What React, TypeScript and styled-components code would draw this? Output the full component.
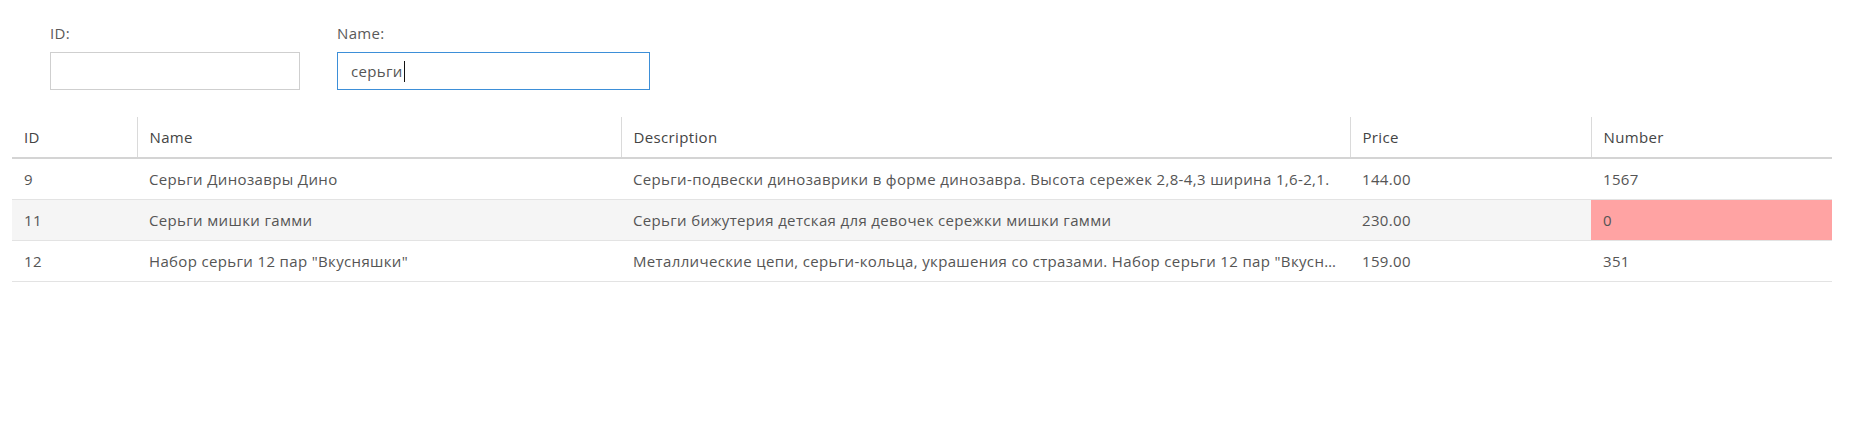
import React from 'react';
import styled, { createGlobalStyle } from 'styled-components';

const GlobalStyle = createGlobalStyle`
  body {
    margin: 0;
    background: #fff;
    font-family: "Open Sans", "Noto Sans", Arial, sans-serif;
    color: #333;
  }
`;

const Page = styled.div`
  padding: 23px 21px 0 12px;
`;

const FilterBar = styled.div`
  display: flex;
  gap: 37px;
  padding-left: 38px;
`;

const Field = styled.div<{ $width: number }>`
  display: flex;
  flex-direction: column;
  width: ${p => p.$width}px;
`;

const Label = styled.div`
  font-size: 15px;
  letter-spacing: 0.35px;
  line-height: 20px;
  color: #5a5a5a;
  margin-bottom: 9px;
`;

const InputBox = styled.div<{ $focused?: boolean }>`
  height: 38px;
  box-sizing: border-box;
  border: 1px solid ${p => (p.$focused ? '#3d8fd8' : '#cfcfcf')};
  display: flex;
  align-items: center;
  padding: 0 13px;
  font-size: 15px;
  letter-spacing: 0.35px;
  color: #555;
`;

const Caret = styled.span`
  display: inline-block;
  width: 1px;
  height: 21px;
  background: #111;
  margin-left: 1px;
`;

const Table = styled.table`
  margin-top: 27px;
  width: 1820px;
  border-collapse: collapse;
  table-layout: fixed;
  font-size: 15px;
  letter-spacing: 0.35px;
  color: #555;
`;

const HeadCell = styled.th<{ $first?: boolean }>`
  height: 40px;
  padding: 0 12px;
  text-align: left;
  font-weight: 400;
  color: #444;
  border-bottom: 2px solid #d4d4d4;
  border-left: ${p => (p.$first ? 'none' : '1px solid #dadada')};
`;

const Row = styled.tr<{ $alt?: boolean }>`
  background: ${p => (p.$alt ? '#f5f5f5' : '#fff')};
`;

const Cell = styled.td<{ $alert?: boolean }>`
  height: 40px;
  padding: 0 12px;
  box-sizing: content-box;
  border-bottom: 1px solid #e3e3e3;
  white-space: nowrap;
  overflow: hidden;
  text-overflow: ellipsis;
  background: ${p => (p.$alert ? '#ffa3a3' : 'transparent')};
`;

const columns = [
  { title: 'ID', width: 125 },
  { title: 'Name', width: 484 },
  { title: 'Description', width: 729 },
  { title: 'Price', width: 241 },
  { title: 'Number', width: 241 },
];

const rows = [
  {
    id: 9,
    name: 'Серьги Динозавры Дино',
    description: 'Серьги-подвески динозаврики в форме динозавра. Высота сережек 2,8-4,3 ширина 1,6-2,1.',
    price: '144.00',
    number: 1567,
  },
  {
    id: 11,
    name: 'Серьги мишки гамми',
    description: 'Серьги бижутерия детская для девочек сережки мишки гамми',
    price: '230.00',
    number: 0,
  },
  {
    id: 12,
    name: 'Набор серьги 12 пар "Вкусняшки"',
    description: 'Металлические цепи, серьги-кольца, украшения со стразами. Набор серьги 12 пар "Вкусняшки" для девочек',
    price: '159.00',
    number: 351,
  },
];

const App: React.FC = () => {
  return (
    <Page>
      <GlobalStyle />
      <FilterBar>
        <Field $width={250}>
          <Label>ID:</Label>
          <InputBox />
        </Field>
        <Field $width={313}>
          <Label>Name:</Label>
          <InputBox $focused>
            <span>серьги</span>
            <Caret />
          </InputBox>
        </Field>
      </FilterBar>
      <Table>
        <colgroup>
          {columns.map(c => (
            <col key={c.title} style={{ width: c.width }} />
          ))}
        </colgroup>
        <thead>
          <tr>
            {columns.map((c, i) => (
              <HeadCell key={c.title} $first={i === 0}>
                {c.title}
              </HeadCell>
            ))}
          </tr>
        </thead>
        <tbody>
          {rows.map((r, i) => (
            <Row key={r.id} $alt={i % 2 === 1}>
              <Cell>{r.id}</Cell>
              <Cell>{r.name}</Cell>
              <Cell>{r.description}</Cell>
              <Cell>{r.price}</Cell>
              <Cell $alert={r.number === 0}>{r.number}</Cell>
            </Row>
          ))}
        </tbody>
      </Table>
    </Page>
  );
};

export default App;
